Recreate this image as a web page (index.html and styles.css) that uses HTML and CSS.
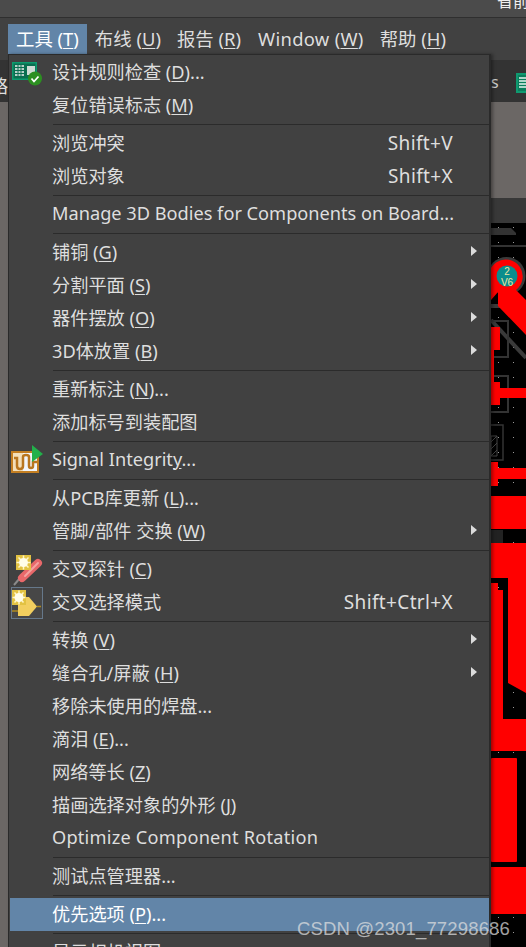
FILE: index.html
```html
<!DOCTYPE html>
<html lang="zh">
<head>
<meta charset="utf-8">
<title>工具菜单</title>
<link rel="stylesheet" href="styles.css">
</head>
<body>
<div class="app">
  <div class="titlebar"><span class="title-frag">省前</span></div>
  <nav class="menubar">
    <span class="top active">工具 (<u>T</u>)</span>
    <span class="top">布线 (<u>U</u>)</span>
    <span class="top">报告 (<u>R</u>)</span>
    <span class="top top-wide">Window (<u>W</u>)</span>
    <span class="top">帮助 (<u>H</u>)</span>
  </nav>
  <div class="toolbar">
    <span class="tool-frag">略</span>
    <span class="tool-s">s</span>
    <svg class="tool-icon" width="10" height="20" viewBox="0 0 10 20"><rect width="14" height="20" fill="#0f9a70"/><rect x="2" y="2" width="12" height="16" fill="#0b7d5c"/><path d="M3 5h8M3 8h8M3 11h8M3 14h8" stroke="#e8f5ee" stroke-width="1.4"/></svg>
  </div>
  <div class="workspace">
    <svg class="board" width="526" height="845" viewBox="0 102 526 845">
      <defs>
        <pattern id="dots" x="498" y="242" width="15" height="15" patternUnits="userSpaceOnUse"><rect width="1" height="1" fill="#9a9a9a"/></pattern>
      </defs>
      <rect x="0" y="102" width="526" height="96" fill="#6b6765"/>
      <rect x="0" y="198" width="526" height="26" fill="#383838"/>
      <rect x="0" y="198" width="8" height="749" fill="#6b6765"/>
      <rect x="8" y="223" width="518" height="724" fill="#000"/>
      <rect x="8" y="223" width="518" height="724" fill="url(#dots)"/>
      <path d="M491 228H511L516 233V235H491Z" fill="#333"/>
      <rect x="491" y="245" width="35" height="2" fill="#333"/>
      <rect x="491" y="304" width="35" height="4" fill="#3a3a3a"/>
      <path d="M491 320L526 358" stroke="#3a3a3a" stroke-width="4"/>
      <path d="M491 321H508V357H491M491 376H508V412H491" fill="none" stroke="#333" stroke-width="2"/>
      <path d="M491 425H503V460H491" fill="none" stroke="#333" stroke-width="1.5"/>
      <path d="M491 436H497V456H491Z" fill="none" stroke="#444"/>
      <path d="M491 442L497 436M491 449L497 443M491 456L497 450" stroke="#444"/>
      <circle cx="506.500" cy="276" r="19" fill="#3a3a3a"/>
      <path d="M491 285A17 17 0 1 1 516 290L526 300V335L498 306V292L491 300Z" fill="#f00"/>
      <circle cx="507" cy="276" r="10.500" fill="#0b8d8d"/>
      <text class="pad-num" x="507" y="275">2</text>
      <text class="pad-num" x="507" y="286">V6</text>
      <path d="M491 327H500V350H494V382H500V388H526V398H500V405H491Z" fill="#f00"/>
      <path d="M491 462H498V468H526V479H498V486H491Z" fill="#f00"/>
      <rect x="491" y="496" width="35" height="33" fill="#f00"/>
      <path d="M491 530H503V543H491Z" fill="#222"/>
      <path d="M491 543H526V693L508 683V578H491Z" fill="#f00"/>
      <path d="M491 583H498V590H503V719H526V751H491Z" fill="#f00"/>
      <rect x="491" y="758" width="26" height="104" rx="1" fill="#f00"/>
      <rect x="491" y="867" width="35" height="47" fill="#f00"/>
    </svg>
    <section class="menu">
      <div class="item"><span class="gutter">
        <svg class="icon" width="32" height="24" viewBox="0 0 32 24"><rect x="0" y="0" width="25" height="18" fill="#0e9a6e"/><rect x="1.500" y="1.500" width="22" height="15" fill="#0a6f50"/><path d="M3 4h9M3 7h9M3 10h9M3 13h9" stroke="#f2f2f2" stroke-width="1.500"/><path d="M6 3v12M9 3v12" stroke="#0a6f50"/><rect x="15" y="4" width="8" height="9" fill="#cfdcd5"/><circle cx="23" cy="16.500" r="7" fill="#2c8f21"/><path d="M19.500 16.500l2.500 3 4.500-5" fill="none" stroke="#fff" stroke-width="1.800"/></svg>
      </span><span class="label">设计规则检查 (<u>D</u>)...</span></div>
      <div class="item"><span class="gutter"></span><span class="label">复位错误标志 (<u>M</u>)</span></div>
      <hr class="sep">
      <div class="item"><span class="gutter"></span><span class="label">浏览冲突</span><span class="key">Shift+V</span></div>
      <div class="item"><span class="gutter"></span><span class="label">浏览对象</span><span class="key">Shift+X</span></div>
      <hr class="sep">
      <div class="item"><span class="gutter"></span><span class="label">Manage 3D Bodies for Components on Board...</span></div>
      <hr class="sep">
      <div class="item sub"><span class="gutter"></span><span class="label">铺铜 (<u>G</u>)</span></div>
      <div class="item sub"><span class="gutter"></span><span class="label">分割平面 (<u>S</u>)</span></div>
      <div class="item sub"><span class="gutter"></span><span class="label">器件摆放 (<u>O</u>)</span></div>
      <div class="item sub"><span class="gutter"></span><span class="label">3D体放置 (<u>B</u>)</span></div>
      <hr class="sep">
      <div class="item"><span class="gutter"></span><span class="label">重新标注 (<u>N</u>)...</span></div>
      <div class="item"><span class="gutter"></span><span class="label">添加标号到装配图</span></div>
      <hr class="sep">
      <div class="item"><span class="gutter">
        <svg class="icon icon-si" width="32" height="30" viewBox="0 0 32 30"><rect x="1" y="8" width="26" height="20" fill="#f2f5fa" stroke="#c47f22" stroke-width="2"/><path d="M2 9h10v18H2Z" fill="#f3dfba"/><path d="M3 14h3v8q0 3 3 3t3-3v-9q0-2 3-2t3 2v9q0 2 2 2t2-2v-4h4" fill="none" stroke="#b9761f" stroke-width="2.500"/><path d="M21 1l11 9-11 8Z" fill="#22b04a"/></svg>
      </span><span class="label">Signal Integrit<u>y</u>...</span></div>
      <hr class="sep">
      <div class="item"><span class="gutter"></span><span class="label">从PCB库更新 (<u>L</u>)...</span></div>
      <div class="item sub"><span class="gutter"></span><span class="label">管脚/部件 交换 (<u>W</u>)</span></div>
      <hr class="sep">
      <div class="item"><span class="gutter">
        <svg class="icon icon-probe" width="32" height="32" viewBox="0 0 32 32"><path d="M1 31l6-7" stroke="#8a8a8a" stroke-width="2"/><path d="M9 24L25 9" stroke="#e8686a" stroke-width="8" stroke-linecap="round"/><path d="M12 22L25 9" stroke="#f3a3a0" stroke-width="2" stroke-linecap="round"/><rect x="3" y="1" width="15" height="15" fill="#e2c243"/><path d="M10.500 1.500v14M3.500 8.500h14M5.500 3.500l10 10M15.500 3.500l-10 10" stroke="#fff6c8" stroke-width="1.500"/><circle cx="10.500" cy="8.500" r="4.500" fill="#fffdea"/></svg>
      </span><span class="label">交叉探针 (<u>C</u>)</span></div>
      <div class="item"><span class="gutter">
        <svg class="icon icon-select" width="32" height="32" viewBox="0 0 32 32"><rect x="0.500" y="0.500" width="31" height="31" fill="#474747" stroke="#66788a"/><path d="M26 19.500h4M1 24h6" stroke="#b08a20" stroke-width="1.500"/><path d="M7 10h11l8 9.500-8 9.500H7Z" fill="#f2cf5f"/><rect x="1" y="3" width="14" height="15" fill="#e2c243"/><path d="M8 3.500v14M1.500 10.500h13M3.500 5.500l9 10M12.500 5.500l-9 10" stroke="#fff6c8" stroke-width="1.500"/><circle cx="8" cy="10.500" r="4.500" fill="#fffdea"/></svg>
      </span><span class="label">交叉选择模式</span><span class="key">Shift+Ctrl+X</span></div>
      <hr class="sep">
      <div class="item sub"><span class="gutter"></span><span class="label">转换 (<u>V</u>)</span></div>
      <div class="item sub"><span class="gutter"></span><span class="label">缝合孔/屏蔽 (<u>H</u>)</span></div>
      <div class="item"><span class="gutter"></span><span class="label">移除未使用的焊盘...</span></div>
      <div class="item"><span class="gutter"></span><span class="label">滴泪 (<u>E</u>)...</span></div>
      <div class="item"><span class="gutter"></span><span class="label">网络等长 (<u>Z</u>)</span></div>
      <div class="item"><span class="gutter"></span><span class="label">描画选择对象的外形 (<u>J</u>)</span></div>
      <div class="item"><span class="gutter"></span><span class="label label-wide">Optimize Component Rotation</span></div>
      <hr class="sep">
      <div class="item"><span class="gutter"></span><span class="label">测试点管理器...</span></div>
      <hr class="sep">
      <div class="item selected"><span class="gutter"></span><span class="label">优先选项 (<u>P</u>)...</span></div>
      <hr class="sep">
      <div class="item"><span class="gutter"></span><span class="label">显示相机视图</span></div>
    </section>
    <div class="watermark">CSDN @2301_77298686</div>
  </div>
</div>
</body>
</html>
```
FILE: styles.css
```css
* { box-sizing: border-box; }
html, body { margin: 0; padding: 0; height: 100%; overflow: hidden; background: #414141; }
body { font-family: "Noto Sans", "Noto Sans CJK SC", sans-serif; color: #dedede; font-size: 18.2px; }
.app { width: 526px; height: 947px; display: flex; flex-direction: column; overflow: hidden; position: relative; }
.titlebar { height: 18px; background: #4b4b4b; border-bottom: 1px solid #2f2f2f; overflow: hidden; display: flex; justify-content: flex-end; }
.title-frag { font-size: 16px; line-height: 16px; margin-top: -7px; width: 29px; white-space: nowrap; overflow: hidden; color: #f0f0f0; }
.menubar { height: 36px; padding: 6px 0 0 8px; background: #414141; display: flex; }
.top { height: 30px; line-height: 30px; padding: 0 8px; white-space: nowrap; font-size: 18.4px; }
.top.active { background: #6285a8; color: #fff; }
.top-wide { letter-spacing: .3px; margin-left: 1px; }
.toolbar { height: 48px; background: #333; border-top: 6px solid #414141; position: relative; overflow: hidden; }
.tool-frag { position: absolute; left: -10px; top: 12px; font-size: 18px; }
.tool-s { position: absolute; left: 491px; top: 11px; font-size: 16px; color: #ccc; }
.tool-icon { position: absolute; left: 516px; top: 13px; }
.workspace { flex: 1; position: relative; }
.board { display: block; }
.pad-num { font: 10px "Liberation Sans", sans-serif; fill: #f3e7a0; text-anchor: middle; }
.menu { position: absolute; left: 8px; top: -48px; width: 483px; height: 893px; background: #414141; border: 1px solid #2a2a2a; border-right-width: 2px; border-bottom: 0; padding: 1px 0 0 1px; box-shadow: 2px 0 3px rgba(0,0,0,.35); overflow: hidden; }
.item { height: 33px; display: flex; align-items: center; white-space: nowrap; position: relative; }
.gutter { width: 42px; flex: none; align-self: stretch; position: relative; }
.icon { position: absolute; left: 2px; top: 6px; }
.icon-si { left: 1px; top: 0; }
.icon-probe { left: 3px; top: 1px; }
.icon-select { left: 1px; top: 1px; }
.label { flex: 1; padding-bottom: 4px; }
.label-wide { letter-spacing: .22px; }
.key { margin-right: 36px; padding-bottom: 1px; font-size: 19px; letter-spacing: .35px; }
.sub::after { content: ""; position: absolute; right: 12px; top: 10px; border-left: 6px solid #dcdcdc; border-top: 5.500px solid transparent; border-bottom: 5.500px solid transparent; }
.selected { background: #6285a8; color: #fff; }
.sep { height: 1px; margin: 2px 0 2px 43px; border: 0; background: #2b2b2b; }
u { text-underline-offset: 2px; text-decoration-thickness: 1px; }
.watermark { position: absolute; left: 297px; top: 816px; font: 18.500px "Liberation Sans", sans-serif; color: rgba(225,225,225,.72); white-space: nowrap; letter-spacing: .15px; }
```
